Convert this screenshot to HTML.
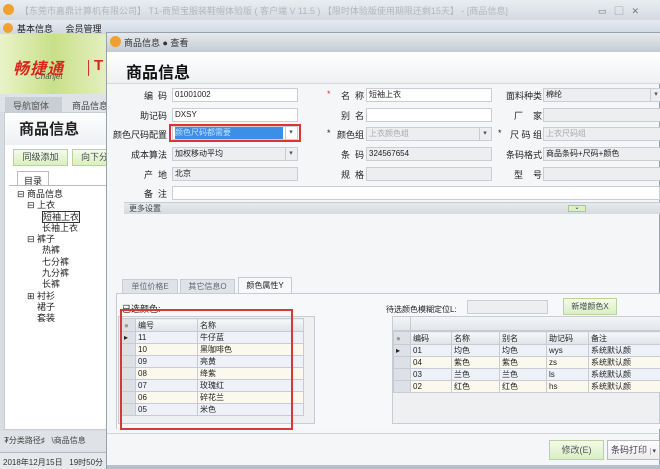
<!DOCTYPE html>
<html><head><meta charset="utf-8">
<style>
*{margin:0;padding:0;box-sizing:border-box}
body{width:660px;height:469px;overflow:hidden;position:relative;background:#d8dde3;font-family:"Liberation Sans","Noto Sans CJK SC",sans-serif;font-size:9px;color:#222}
.a{position:absolute;white-space:nowrap}
.in{position:absolute;height:14px;border:1px solid #c9ced4;background:#fff;font-size:8px;line-height:12px;padding-left:2px}
.g{background:#eceef0}
.dd:after{content:"▾";position:absolute;right:1px;top:0;width:10px;height:12px;border-left:1px solid #ccc;font-size:7px;text-align:center;color:#555}
.lb{position:absolute;font-size:9px;text-align:right;white-space:nowrap}
.btn{position:absolute;border:1px solid #b9d49b;background:linear-gradient(#f4fbe9,#d9efc0);text-align:center;font-size:9px;color:#445}
table{border-collapse:collapse;font-size:8px}
td{border:1px solid #c8ccd2;height:12px;padding-left:2px;line-height:11px;white-space:nowrap;overflow:hidden}
tr.h td{background:linear-gradient(#f6f7f9,#dfe3e8);height:13px}
tr.o td{background:#eef1f8}
tr.e td{background:#fbf9ee}
td.s{background:#dde1e6 !important;width:14px}
</style></head><body>
<!-- title bar -->
<div class="a" style="left:0;top:0;width:660px;height:20px;background:linear-gradient(#e9edf1,#d4dae0)"></div>
<div class="a" style="left:3px;top:4px;width:11px;height:11px;border-radius:50%;background:#f0a030"></div>
<div class="a" style="left:20px;top:4px;color:#b0b6c0;font-size:9px">【东莞市嘉鼎计算机有限公司】 T1-商贸宝服装鞋帽体验版 ( 客户端 V 11.5 ) 【限时体验版使用期限还剩15天】 - [商品信息]</div>
<div class="a" style="left:598px;top:4px;color:#777;font-size:9px;letter-spacing:8px">▭▢✕</div>
<!-- menu -->
<div class="a" style="left:0;top:20px;width:660px;height:14px;background:linear-gradient(#e6ebf2,#cfd7e2)"></div>
<div class="a" style="left:3px;top:23px;width:10px;height:10px;border-radius:50%;background:#f0a030"></div>
<div class="a" style="left:17px;top:22px;font-size:9px">基本信息&nbsp;&nbsp;&nbsp;&nbsp;&nbsp;会员管理</div>
<!-- left logo -->
<div class="a" style="left:0;top:34px;width:107px;height:60px;background:linear-gradient(90deg,#eaf3c8,#c8e08a 50%,#e4efc0)"></div>
<div class="a" style="left:13px;top:55px;font-size:16px;font-weight:bold;font-style:italic;color:#d8261c;letter-spacing:1px">畅捷通</div>
<div class="a" style="left:35px;top:72px;font-size:8px;font-style:italic;color:#555">Chanjet</div>
<div class="a" style="left:88px;top:60px;width:1px;height:16px;background:#c33"></div>
<div class="a" style="left:94px;top:57px;font-size:15px;font-weight:bold;color:#d8261c">T</div>
<!-- left tabs -->
<div class="a" style="left:0;top:94px;width:107px;height:18px;background:#dfe3e7"></div>
<div class="a" style="left:5px;top:97px;width:57px;height:15px;background:#c9ced4;font-size:9px;color:#555;padding:2px 0 0 8px">导航窗体</div>
<div class="a" style="left:64px;top:97px;font-size:9px;color:#444;padding:2px 0 0 8px">商品信息</div>
<div class="a" style="left:4px;top:112px;width:103px;height:318px;background:#fff;border:1px solid #c7ccd2"></div>
<div class="a" style="left:5px;top:113px;width:102px;height:32px;background:linear-gradient(#fff,#eef0f3)"></div>
<div class="a" style="left:19px;top:118px;font-size:15px;font-weight:bold;color:#222">商品信息</div>
<div class="btn" style="left:13px;top:149px;width:55px;height:17px;line-height:15px">同级添加</div>
<div class="btn" style="left:72px;top:149px;width:40px;height:17px;line-height:15px;text-align:left;padding-left:8px">向下分</div>
<div class="a" style="left:17px;top:171px;width:32px;height:15px;border:1px solid #bbb;border-bottom:none;background:#fff;font-size:9px;padding:2px 0 0 6px">目录</div>
<div class="a" style="left:9px;top:185px;width:98px;height:1px;background:#bbb"></div>
<div class="a" style="left:17px;top:189px;font-size:9px;line-height:11.3px">⊟ 商品信息<br>&nbsp;&nbsp;&nbsp;&nbsp;⊟ 上衣<br>&nbsp;&nbsp;&nbsp;&nbsp;&nbsp;&nbsp;&nbsp;&nbsp;&nbsp;&nbsp;<span style="border:1px solid #333">短袖上衣</span><br>&nbsp;&nbsp;&nbsp;&nbsp;&nbsp;&nbsp;&nbsp;&nbsp;&nbsp;&nbsp;长袖上衣<br>&nbsp;&nbsp;&nbsp;&nbsp;⊟ 裤子<br>&nbsp;&nbsp;&nbsp;&nbsp;&nbsp;&nbsp;&nbsp;&nbsp;&nbsp;&nbsp;热裤<br>&nbsp;&nbsp;&nbsp;&nbsp;&nbsp;&nbsp;&nbsp;&nbsp;&nbsp;&nbsp;七分裤<br>&nbsp;&nbsp;&nbsp;&nbsp;&nbsp;&nbsp;&nbsp;&nbsp;&nbsp;&nbsp;九分裤<br>&nbsp;&nbsp;&nbsp;&nbsp;&nbsp;&nbsp;&nbsp;&nbsp;&nbsp;&nbsp;长裤<br>&nbsp;&nbsp;&nbsp;&nbsp;⊞ 衬衫<br>&nbsp;&nbsp;&nbsp;&nbsp;&nbsp;&nbsp;&nbsp;&nbsp;裙子<br>&nbsp;&nbsp;&nbsp;&nbsp;&nbsp;&nbsp;&nbsp;&nbsp;套装</div>
<div class="a" style="left:0;top:431px;width:107px;height:20px;background:#dfe3e7"></div>
<div class="a" style="left:4px;top:435px;font-size:8px;color:#444">₮分类路径♯&nbsp;&nbsp;&nbsp;\商品信息</div>
<div class="a" style="left:0;top:452px;width:107px;height:17px;background:#e6e9ec;border-top:1px solid #bbb"></div>
<div class="a" style="left:3px;top:457px;font-size:8px;color:#333">2018年12月15日&nbsp;&nbsp;&nbsp;19时50分</div>
<!-- dialog -->
<div class="a" style="left:106px;top:32px;width:554px;height:437px;background:#f4f6f8;border:1px solid #98a2ae"></div>
<div class="a" style="left:107px;top:33px;width:553px;height:19px;background:linear-gradient(#e6eaee,#c3cbd3)"></div>
<div class="a" style="left:110px;top:36px;width:11px;height:11px;border-radius:50%;background:#f0a030"></div>
<div class="a" style="left:124px;top:36px;font-size:9px;color:#333">商品信息 ● 查看</div>
<div class="a" style="left:107px;top:52px;width:553px;height:32px;background:linear-gradient(#fff,#eef0f2);border-bottom:1px solid #d3d8dd"></div>
<div class="a" style="left:126px;top:59px;font-size:16px;font-weight:bold;color:#111">商品信息</div>
<!-- col1 -->
<div class="lb" style="left:110px;top:89px;width:57px">编&nbsp;&nbsp;码</div>
<div class="in" style="left:172px;top:88px;width:126px">01001002</div>
<div class="lb" style="left:110px;top:109px;width:57px">助记码</div>
<div class="in" style="left:172px;top:108px;width:126px">DXSY</div>
<div class="lb" style="left:110px;top:128px;width:57px">颜色尺码配置</div>
<div class="a" style="left:169px;top:124px;width:132px;height:18px;border:2px solid #d33"></div>
<div class="in dd" style="left:172px;top:126px;width:126px;background:#fff"><span style="background:#3d8ee6;color:#bfe0ff;display:inline-block;width:108px">颜色尺码都需要</span></div>
<div class="lb" style="left:110px;top:148px;width:57px">成本算法</div>
<div class="in g dd" style="left:172px;top:147px;width:126px">加权移动平均</div>
<div class="lb" style="left:110px;top:168px;width:57px">产&nbsp;&nbsp;地</div>
<div class="in g" style="left:172px;top:167px;width:126px">北京</div>
<div class="lb" style="left:110px;top:187px;width:57px">备&nbsp;&nbsp;注</div>
<div class="in" style="left:172px;top:186px;width:488px"></div>
<!-- col2 -->
<div class="a" style="left:327px;top:89px;color:#d33">*</div>
<div class="lb" style="left:336px;top:89px;width:28px">名&nbsp;&nbsp;称</div>
<div class="in" style="left:366px;top:88px;width:126px">短袖上衣</div>
<div class="lb" style="left:336px;top:109px;width:28px">别&nbsp;&nbsp;名</div>
<div class="in" style="left:366px;top:108px;width:126px"></div>
<div class="a" style="left:327px;top:128px">*</div>
<div class="lb" style="left:334px;top:128px;width:30px">颜色组</div>
<div class="in g dd" style="left:366px;top:127px;width:126px;color:#aaa">上衣颜色组</div>
<div class="lb" style="left:336px;top:148px;width:28px">条&nbsp;&nbsp;码</div>
<div class="in g" style="left:366px;top:147px;width:126px">324567654</div>
<div class="lb" style="left:336px;top:168px;width:28px">规&nbsp;&nbsp;格</div>
<div class="in g" style="left:366px;top:167px;width:126px"></div>
<!-- col3 -->
<div class="lb" style="left:500px;top:89px;width:42px">面料种类</div>
<div class="in g dd" style="left:543px;top:88px;width:120px">棉纶</div>
<div class="lb" style="left:506px;top:109px;width:36px">厂&nbsp;&nbsp;&nbsp;&nbsp;家</div>
<div class="in g" style="left:543px;top:108px;width:120px"></div>
<div class="a" style="left:498px;top:128px">*</div>
<div class="lb" style="left:504px;top:128px;width:38px">尺 码 组</div>
<div class="in g" style="left:543px;top:127px;width:120px;color:#aaa">上衣尺码组</div>
<div class="lb" style="left:500px;top:148px;width:42px">条码格式</div>
<div class="in g" style="left:543px;top:147px;width:120px">商品条码+尺码+颜色</div>
<div class="lb" style="left:506px;top:168px;width:36px">型&nbsp;&nbsp;&nbsp;&nbsp;号</div>
<div class="in g" style="left:543px;top:167px;width:120px"></div>
<!-- more settings -->
<div class="a" style="left:124px;top:202px;width:536px;height:12px;background:linear-gradient(#e7eaed,#d5dade);border-top:1px solid #c6ccd2"></div>
<div class="a" style="left:129px;top:203px;font-size:8px;color:#444">更多设置</div>
<div class="a" style="left:568px;top:205px;width:18px;height:7px;border:1px solid #a9c88a;background:#dcefc6;font-size:6px;line-height:5px;text-align:center">⌄</div>
<!-- tabs -->
<div class="a" style="left:122px;top:279px;width:56px;height:15px;background:#dfe3e8;border:1px solid #c6ccd2;font-size:8px;color:#667;text-align:center;line-height:13px">单位价格E</div>
<div class="a" style="left:180px;top:279px;width:55px;height:15px;background:#dfe3e8;border:1px solid #c6ccd2;font-size:8px;color:#667;text-align:center;line-height:13px">其它信息O</div>
<div class="a" style="left:238px;top:277px;width:54px;height:17px;background:#f7f8fa;border:1px solid #c6ccd2;border-bottom:none;font-size:8px;text-align:center;line-height:15px">颜色属性Y</div>
<div class="a" style="left:116px;top:293px;width:544px;height:136px;border-top:1px solid #c6ccd2;border-left:1px solid #c6ccd2;background:#f7f8fa"></div>
<div class="a" style="left:122px;top:302px;font-size:9px">已选颜色:</div>
<div class="a" style="left:118px;top:316px;width:197px;height:108px;background:#eef0f2;border:1px solid #c6ccd2"></div>
<table class="a" style="left:121px;top:318px;width:183px">
<tr class="h"><td class="s" style="color:#999">●</td><td style="width:62px">编号</td><td>名称</td></tr>
<tr class="o"><td class="s">▸</td><td>11</td><td>牛仔蓝</td></tr>
<tr class="e"><td class="s"></td><td>10</td><td>黑咖啡色</td></tr>
<tr class="o"><td class="s"></td><td>09</td><td>亮黄</td></tr>
<tr class="e"><td class="s"></td><td>08</td><td>绛紫</td></tr>
<tr class="o"><td class="s"></td><td>07</td><td>玫瑰红</td></tr>
<tr class="e"><td class="s"></td><td>06</td><td>碎花兰</td></tr>
<tr class="o"><td class="s"></td><td>05</td><td>米色</td></tr>
</table>
<div class="a" style="left:120px;top:309px;width:173px;height:121px;border:2px solid #d9363a"></div>
<!-- right -->
<div class="a" style="left:386px;top:304px;font-size:8px">待选颜色模糊定位L:</div>
<div class="in g" style="left:467px;top:300px;width:81px"></div>
<div class="btn" style="left:563px;top:298px;width:54px;height:17px;line-height:15px;font-size:8px">新增颜色X</div>
<div class="a" style="left:392px;top:316px;width:268px;height:108px;background:#eef0f2;border:1px solid #c6ccd2"></div>
<div class="a" style="left:393px;top:317px;width:267px;height:14px;background:linear-gradient(#f3f5f7,#e2e6ea);border-bottom:1px solid #c8ccd2"></div>
<div class="a" style="left:410px;top:317px;width:1px;height:14px;background:#c8ccd2"></div>
<table class="a" style="left:393px;top:331px;width:269px">
<tr class="h"><td class="s" style="color:#999;width:17px">●</td><td style="width:41px">编码</td><td style="width:48px">名称</td><td style="width:47px">别名</td><td style="width:42px">助记码</td><td>备注</td></tr>
<tr class="o"><td class="s">▸</td><td>01</td><td>均色</td><td>均色</td><td>wys</td><td>系统默认颜</td></tr>
<tr class="e"><td class="s"></td><td>04</td><td>紫色</td><td>紫色</td><td>zs</td><td>系统默认颜</td></tr>
<tr class="o"><td class="s"></td><td>03</td><td>兰色</td><td>兰色</td><td>ls</td><td>系统默认颜</td></tr>
<tr class="e"><td class="s"></td><td>02</td><td>红色</td><td>红色</td><td>hs</td><td>系统默认颜</td></tr>
</table>
<!-- bottom -->
<div class="a" style="left:107px;top:433px;width:553px;height:1px;background:#cfd4d9"></div>
<div class="btn" style="left:549px;top:440px;width:55px;height:20px;line-height:18px;color:#556">修改(E)</div>
<div class="btn" style="left:607px;top:440px;width:53px;height:20px;line-height:18px;background:linear-gradient(#fdfdfd,#ececec);border-color:#bbb;text-align:left;padding-left:3px">条码打印 <span style="border-left:1px solid #bbb;padding-left:2px;font-size:7px">▾</span></div>
<div class="a" style="left:107px;top:465px;width:553px;height:4px;background:#b7c0ca"></div>
</body></html>
